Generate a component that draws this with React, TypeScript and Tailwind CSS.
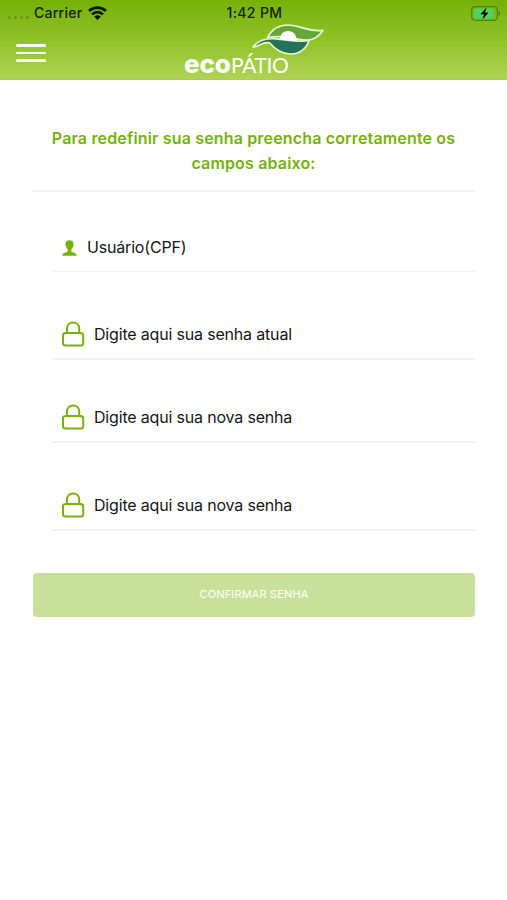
import React, { useState } from 'react';

interface FieldProps {
  label: string;
  icon: React.ReactNode;
  className: string;
}

const UserIcon = () => (
  <svg className="w-[15px] h-[16px] mr-[10px] shrink-0" viewBox="0 0 15 16" fill="#76b20b">
    <path d="M7.5 0.3C4.9 0.3 3.3 1.9 3.4 4.4C3.5 6.5 4.6 8.3 5.6 9.3V11.4C4.6 12.6 0.6 12.2 0.2 15.7H14.8C14.4 12.2 10.4 12.6 9.4 11.4V9.3C10.4 8.3 11.5 6.5 11.6 4.4C11.7 1.9 10.1 0.3 7.5 0.3Z" />
  </svg>
);

const LockIcon = () => (
  <svg className="w-6 h-[26px] mr-[9px] shrink-0" viewBox="0 0 24 26" fill="none" stroke="#76b20b" strokeWidth="2">
    <rect x="2" y="12" width="20.2" height="12.5" rx="2.5" />
    <path d="M6 12V7.5C6 3.9 8.6 1.5 12.1 1.5C15.6 1.5 18.2 3.9 18.2 7.5V12" />
  </svg>
);

const Leaf = () => (
  <svg className="absolute left-[68px] top-[-3px] w-[74px] h-[34px]" viewBox="0 0 74 34">
    <g stroke="#eaf6d2" strokeWidth="1.7" strokeLinejoin="round">
      <path d="M15.500 14.500C20 6 27 2 36 2C48 2 55 9.200 71 7.300C67 13.500 63 16.800 56 17C50 17.200 46 16 42 15.500C36 14.500 28 12 15.500 14.500Z" fill="#66a53b" />
      <path d="M1 24C7 16.500 14 15.500 24 15.800C36 16.500 45 20 57 17.500C54.500 25.500 47.500 31.200 38 31C28 30.800 22 25 17.500 19.800C11 18 6 24 1 24Z" fill="#237259" />
    </g>
    <path d="M28 16.300C28 11.300 31.500 8 36.300 8C41 8 44.600 11.500 45 18C39 18 34 16.800 28 16.300Z" fill="#fff" />
  </svg>
);

const StatusBar = () => (
  <div className="h-[26px] pl-2 pr-[6px] grid grid-cols-3 items-center text-[14px] leading-[26px] font-medium text-[#142400]">
    <div className="flex items-center tracking-[0.25px]">
      <div className="flex gap-[3px] mr-[5px] pt-[8px]">
        {[0, 1, 2, 3].map(dot => (
          <span key={dot} className="size-[3px] rounded-full bg-[#649516]" />
        ))}
      </div>
      <span>Carrier</span>
      <svg className="ml-[6px] w-[19px] h-[14px]" viewBox="0 0 19 14" fill="none" stroke="#0c1700" strokeWidth="2.7">
        <path d="M1 5C5.8 0.5 13.2 0.5 18 5" />
        <path d="M4 8.4C7.2 5.3 11.8 5.3 15 8.4" />
        <path d="M6.2 10.7C8.2 8.9 10.8 8.9 12.8 10.7L9.5 13.9Z" fill="#0c1700" stroke="none" />
      </svg>
    </div>
    <span className="text-center tracking-[0.35px]">1:42 PM</span>
    <div className="flex justify-end">
      <svg className="w-[30px] h-[15px]" viewBox="0 0 30 15">
        <rect x="0.7" y="0.7" width="25.6" height="13.6" rx="3.5" fill="none" stroke="#4c850b" strokeWidth="1.2" />
        <rect x="2.5" y="2.5" width="20" height="10" rx="2" fill="#4fd263" />
        <path d="M27.5 5C29.6 6 29.6 9 27.5 10Z" fill="#4c850b" />
        <path d="M15.5 1.5L9.5 8.3H13L11.5 13.5L17.5 6.5H14Z" fill="#000" />
      </svg>
    </div>
  </div>
);

const Field = ({ label, icon, className }: FieldProps) => {
  const [value, setValue] = useState('');

  return (
    <label className={`ml-5 flex border-[#f1f1f1] ${className}`}>
      {icon}
      <input
        value={value}
        onChange={e => setValue(e.target.value)}
        placeholder={label}
        className="h-6 flex-1 min-w-0 bg-transparent text-[16px] leading-6 tracking-[-0.18px] text-[#161616] placeholder-[#161616] outline-none"
      />
    </label>
  );
};

const App = () => {
  return (
    <div className="w-full min-h-screen bg-white font-['Inter','Liberation_Sans',sans-serif]">
      <header className="h-20 bg-linear-to-b from-[#75b106] via-[#8fc226] to-[#afd453] border-b border-[#a9c774]">
        <StatusBar />
        <div className="h-[53px] grid grid-cols-[184px_1fr]">
          <button aria-label="Menu" className="ml-4 mt-[18px] w-[30px] flex flex-col gap-[5px] self-start">
            <span className="w-full h-[2.5px] rounded-full bg-white" />
            <span className="w-full h-[2.5px] rounded-full bg-white" />
            <span className="w-full h-[2.5px] rounded-full bg-white" />
          </button>
          <div className="relative pt-[24px] text-white whitespace-nowrap leading-7 flex items-baseline">
            <span className="w-[47px] text-[26px] tracking-[-0.2px] font-extrabold">eco</span>
            <span className="text-[21px] tracking-[-0.4px] font-['Lato',sans-serif]">PÁTIO</span>
            <Leaf />
          </div>
        </div>
      </header>

      <main className="pl-8 pr-8 pt-[46px]">
        <h1 className="h-[66px] text-center text-[16px] leading-[25px] font-semibold tracking-[0.16px] text-[#76b20b] border-b-2 border-[#f3f3f3]">
          Para redefinir sua senha preencha corretamente os
          <br />
          campos abaixo:
        </h1>
        <form onSubmit={e => e.preventDefault()}>
          <Field label="Usuário(CPF)" icon={<UserIcon />} className="mt-[43px] h-[37px] pl-[10px] border-b [&>svg]:mt-[5px]" />
          <Field label="Digite aqui sua senha atual" icon={<LockIcon />} className="mt-[49px] h-[39px] pl-[9px] border-b-2 [&>input]:mt-px" />
          <Field label="Digite aqui sua nova senha" icon={<LockIcon />} className="mt-[44px] h-[39px] pl-[9px] border-b-2 [&>input]:mt-px" />
          <Field label="Digite aqui sua nova senha" icon={<LockIcon />} className="mt-[49px] h-[39px] pl-[9px] border-b-2 [&>input]:mt-px" />
          <button
            type="submit"
            className="mt-[42px] ml-px w-[442px] h-11 pb-[2px] rounded-[4px] bg-[#c8e19a] text-[11px] text-white tracking-[0.15px]"
          >
            CONFIRMAR SENHA
          </button>
        </form>
      </main>
    </div>
  );
};

export default App;
